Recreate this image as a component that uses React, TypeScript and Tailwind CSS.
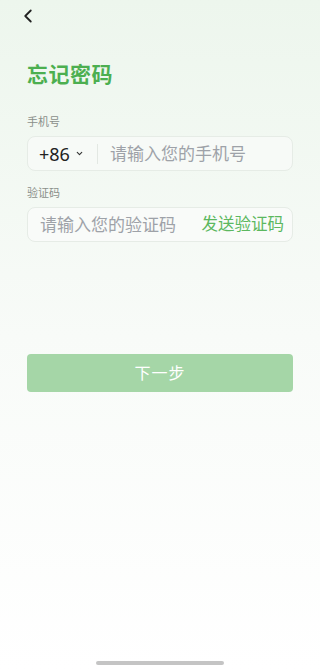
import { ChevronLeft, ChevronDown } from "lucide-react";

const FONT = { fontFamily: '"Noto Sans", "Noto Sans CJK SC", sans-serif' };

export default function App() {
  return (
    <div
      className="relative flex min-h-[670px] w-full flex-col bg-gradient-to-b from-[#edf6ed] via-[#f8fbf8] via-50% to-white"
      style={FONT}
    >
      {/* Top bar */}
      <div className="flex h-[30px] items-center px-[17px] pt-[1px]">
        <ChevronLeft className="h-[22px] w-[22px] text-[#222]" strokeWidth={2} />
      </div>

      <div className="px-[27px]">
        <h1 className="mt-[30px] text-[21px] font-bold leading-[28px] tracking-[0.5px] text-[#4caf50]">
          忘记密码
        </h1>

        {/* Phone */}
        <p className="mt-[27px] text-[11px] leading-[14px] text-[#8a8f8a]">手机号</p>
        <div className="mt-[7px] flex h-[35px] items-center rounded-[8px] border border-[#e6ece6] bg-[#f7faf7]">
          <span className="pl-[11px] text-[18px] leading-none text-[#222]">+86</span>
          <ChevronDown className="ml-[5px] h-[9px] w-[9px] text-[#333]" strokeWidth={3} />
          <div className="ml-[13px] h-[20px] w-px bg-[#e3e8e3]" />
          <span className="ml-[12px] text-[17px] leading-none text-[#9ea2a8]">请输入您的手机号</span>
        </div>

        {/* Code */}
        <p className="mt-[15px] text-[11px] leading-[14px] text-[#8a8f8a]">验证码</p>
        <div className="mt-[7px] flex h-[35px] items-center justify-between rounded-[8px] border border-[#e6ece6] bg-[#f9fbf9] pl-[12px] pr-[8px]">
          <span className="text-[17px] leading-none text-[#9ea2a8]">请输入您的验证码</span>
          <span className="text-[16.5px] leading-none text-[#5cb85f]">发送验证码</span>
        </div>

        {/* Next */}
        <button className="mt-[112px] flex h-[38px] w-full items-center justify-center rounded-[4px] bg-[#a5d6a7] text-[16px] tracking-[1px] text-white">
          下一步
        </button>
      </div>

      {/* Home indicator */}
      <div className="absolute bottom-[5px] left-1/2 h-[4px] w-[128px] -translate-x-1/2 rounded-full bg-[#c4c4c4]" />
    </div>
  );
}
